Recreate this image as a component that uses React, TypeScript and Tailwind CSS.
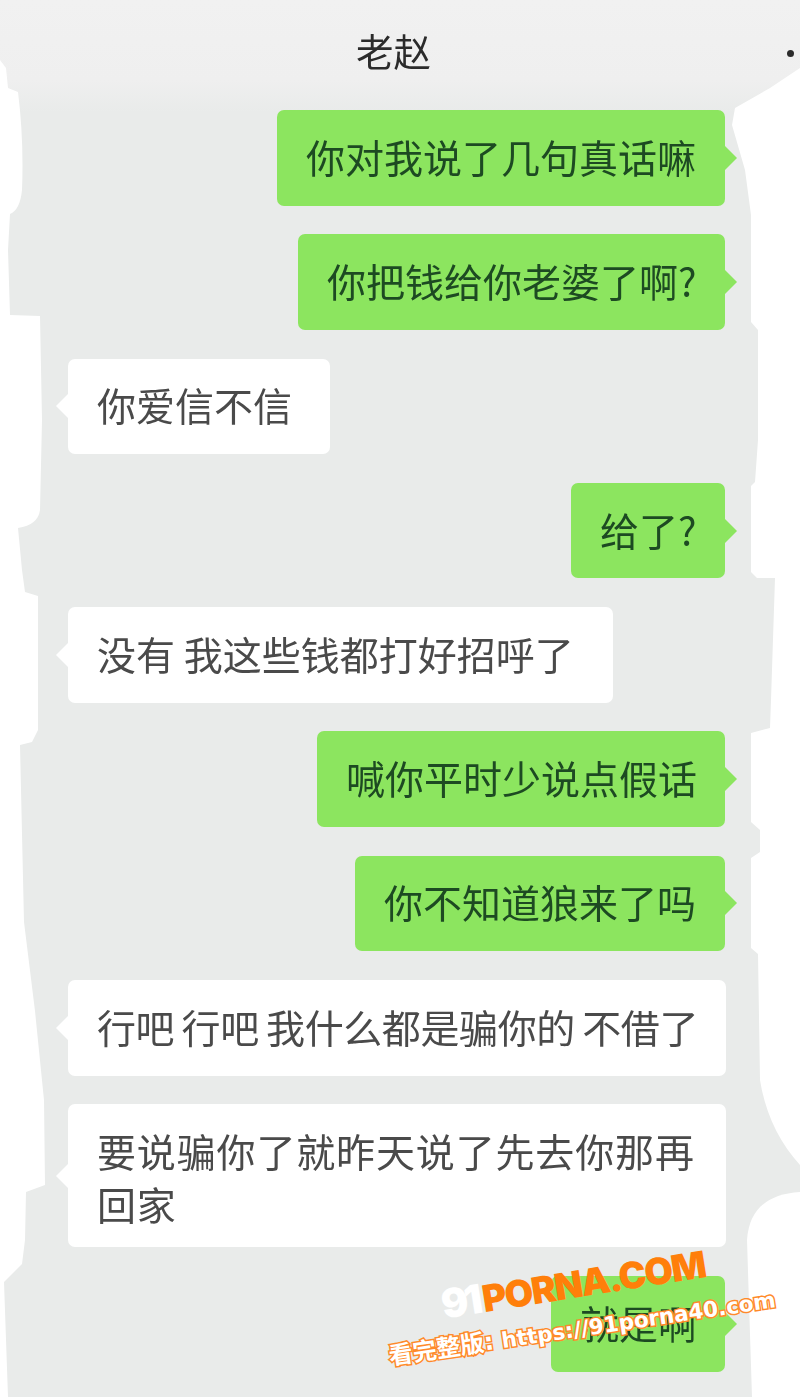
const CJK = "font-['Noto_Sans_CJK_SC','Noto_Sans_CJK_JP',sans-serif]";

type Msg = { text: string; mine: boolean; width: number; tall?: boolean; textClass?: string };

const messages: Msg[] = [
  { text: "你对我说了几句真话嘛", mine: true, width: 448 },
  { text: "你把钱给你老婆了啊?", mine: true, width: 427 },
  { text: "你爱信不信", mine: false, width: 262 },
  { text: "给了?", mine: true, width: 154 },
  { text: "没有 我这些钱都打好招呼了", mine: false, width: 545 },
  { text: "喊你平时少说点假话", mine: true, width: 408 },
  { text: "你不知道狼来了吗", mine: true, width: 370 },
  { text: "行吧 行吧 我什么都是骗你的 不借了", mine: false, width: 658, textClass: "whitespace-nowrap tracking-[-0.4px] [word-spacing:-1px]" },
  { text: "要说骗你了就昨天说了先去你那再回家", mine: false, width: 658, tall: true, textClass: "tracking-[0.85px]" },
  { text: "就是啊", mine: true, width: 174 },
];

function Bubble({ msg }: { msg: Msg }) {
  const tone = msg.mine ? "bg-[#8ce55f] text-[#1d4a22]" : "bg-white text-[#4a4a4a]";
  return (
    <div className={msg.mine ? "flex justify-end pr-[75px]" : "flex justify-start pl-[68px]"}>
      <div
        style={{ width: msg.width }}
        className={`relative rounded-[7px] pl-[29px] pr-[20px] ${tone} ${msg.tall ? "h-[143px] pt-[20px]" : "flex h-[95.6px] items-center pb-[3px]"}`}
      >
        <span
          className={
            msg.mine
              ? "absolute top-1/2 right-[-12px] h-0 w-0 -translate-y-1/2 border-y-[12px] border-l-[12px] border-y-transparent border-l-[#8ce55f]"
              : "absolute top-1/2 left-[-12px] h-0 w-0 -translate-y-1/2 border-y-[12px] border-r-[12px] border-y-transparent border-r-white"
          }
        />
        <p className={`text-[39px] leading-[53px] font-normal blur-[0.5px] ${msg.textClass ?? ""}`}>{msg.text}</p>
      </div>
    </div>
  );
}

function Watermark() {
  return (
    <div className="pointer-events-none absolute top-[1240px] left-[385px] h-[150px] w-[410px]">
      <div className="absolute top-[24px] left-[55px] flex -rotate-[9deg] items-baseline whitespace-nowrap font-['Inter',sans-serif] font-black">
        <span className="text-[40px] leading-none tracking-[-4px] text-white">91</span>
        <span className="ml-[4px] text-[37px] leading-none tracking-[-1.6px] text-[#ff7f0a]">PORNA.COM</span>
      </div>
      <p className="absolute top-[76px] left-[2px] flex -rotate-[8.5deg] items-baseline whitespace-nowrap font-['DejaVu_Sans','Noto_Sans_CJK_SC',sans-serif] leading-none font-bold text-white [-webkit-text-stroke:3px_#ff8a2a] [paint-order:stroke_fill]">
        <span className="text-[24px]">看完整版:</span>
        <span className="ml-[8px] text-[21.5px]">https://91porna40.com</span>
      </p>
    </div>
  );
}

export default function App() {
  return (
    <div className={`relative h-[1397px] w-[800px] overflow-hidden bg-[linear-gradient(#f1f1f1_0,#efefef_80px,#e9ebea_112px,#e9ebea_100%)] ${CJK}`}>
      {/* torn white edges of the cropped photo */}
      <svg className="absolute inset-0" width="800" height="1397" viewBox="0 0 800 1397">
        <path
          fill="#fff"
          d="M0 60 L6 68 L8 88 L18 92 Q24 140 22 190 Q20 210 10 214 L8 250 L10 315 L40 316 L42 420 L40 510 Q38 525 18 528 L22 570 L25 592 L38 596 L38 730 L32 742 L20 745 L24 922 L35 1011 L44 1100 L45 1185 L26 1192 L25 1240 L22 1264 L4 1282 L8 1397 L0 1397 Z"
        />
        <path
          fill="#fff"
          d="M800 68 L770 88 L735 108 L732 125 L745 170 L751 215 L751 322 L758 330 L758 440 L755 482 L751 486 L751 572 L757 578 L775 578 L771 700 L770 728 L751 733 L751 822 L760 830 L760 852 L751 858 L751 948 L758 954 L760 1080 Q768 1130 800 1165 Z"
        />
        <path fill="#fff" d="M800 1192 Q750 1195 747 1240 L752 1397 L800 1397 Z" />
      </svg>

      <div className="relative flex h-[108px] items-center justify-center pr-[13px] pb-[9px]">
        <h1 className="text-[37.5px] leading-none font-normal blur-[0.3px] text-[#2b2b2b]">老赵</h1>
        <span className="absolute top-[50px] left-[787px] h-[7px] w-[7px] rounded-full bg-[#2b2b2b]" />
      </div>

      <div className="relative flex flex-col gap-[28.7px] pt-[2px]">
        {messages.map((m) => (
          <Bubble key={m.text} msg={m} />
        ))}
      </div>

      <Watermark />
    </div>
  );
}
